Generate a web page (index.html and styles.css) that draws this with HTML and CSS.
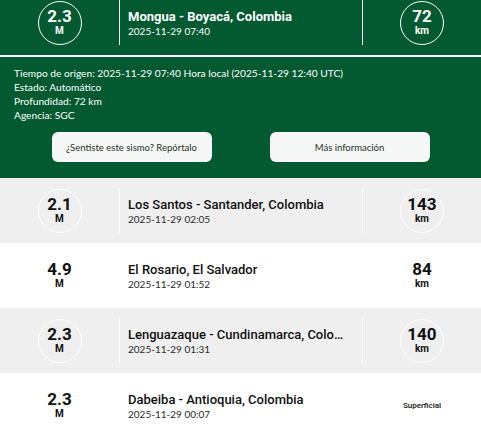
FILE: index.html
```html
<!DOCTYPE html>
<html lang="es">
<head>
  <meta charset="UTF-8" />
  <meta name="viewport" content="width=device-width, initial-scale=1" />
  <title>Sismos recientes</title>
  <link rel="stylesheet" href="styles.css">
</head>
<body>
  <div class="quake-list">

    <div class="quake open">
      <div class="quake-row">
        <div class="col-mag">
          <div class="badge"><span class="value">2.3</span><span class="unit">M</span></div>
        </div>
        <div class="col-info">
          <div class="place">Mongua - Boyacá, Colombia</div>
          <div class="time">2025-11-29 07:40</div>
        </div>
        <div class="col-depth">
          <div class="badge"><span class="value">72</span><span class="unit">km</span></div>
        </div>
      </div>
      <div class="details">
        <p>Tiempo de origen: 2025-11-29 07:40 Hora local (2025-11-29 12:40 UTC)</p>
        <p>Estado: Automático</p>
        <p>Profundidad: 72 km</p>
        <p>Agencia: SGC</p>
        <div class="actions">
          <button class="action-btn">¿Sentiste este sismo? Repórtalo</button>
          <button class="action-btn">Más información</button>
        </div>
      </div>
    </div>

    <div class="quake gray">
      <div class="quake-row">
        <div class="col-mag">
          <div class="badge"><span class="value">2.1</span><span class="unit">M</span></div>
        </div>
        <div class="col-info">
          <div class="place">Los Santos - Santander, Colombia</div>
          <div class="time">2025-11-29 02:05</div>
        </div>
        <div class="col-depth">
          <div class="badge"><span class="value">143</span><span class="unit">km</span></div>
        </div>
      </div>
    </div>

    <div class="quake">
      <div class="quake-row">
        <div class="col-mag">
          <div class="badge"><span class="value">4.9</span><span class="unit">M</span></div>
        </div>
        <div class="col-info">
          <div class="place">El Rosario, El Salvador</div>
          <div class="time">2025-11-29 01:52</div>
        </div>
        <div class="col-depth">
          <div class="badge"><span class="value">84</span><span class="unit">km</span></div>
        </div>
      </div>
    </div>

    <div class="quake gray">
      <div class="quake-row">
        <div class="col-mag">
          <div class="badge"><span class="value">2.3</span><span class="unit">M</span></div>
        </div>
        <div class="col-info">
          <div class="place">Lenguazaque - Cundinamarca, Colombia</div>
          <div class="time">2025-11-29 01:31</div>
        </div>
        <div class="col-depth">
          <div class="badge"><span class="value">140</span><span class="unit">km</span></div>
        </div>
      </div>
    </div>

    <div class="quake">
      <div class="quake-row">
        <div class="col-mag">
          <div class="badge"><span class="value">2.3</span><span class="unit">M</span></div>
        </div>
        <div class="col-info">
          <div class="place">Dabeiba - Antioquia, Colombia</div>
          <div class="time">2025-11-29 00:07</div>
        </div>
        <div class="col-depth">
          <span class="shallow">Superficial</span>
        </div>
      </div>
    </div>

  </div>
</body>
</html>
```

FILE: styles.css
```css
body {
  margin: 0;
  padding: 0;
  font-family: Roboto, "Liberation Sans", sans-serif;
  background-color: #fff;
  color: #111;
  overflow: hidden;
}

/* list is scrolled a little, first row is cut at the top */
.quake-list {
  margin-top: -10px;
}

.quake {
  background-color: #fff;
}
.quake.gray {
  background-color: #efefef;
}
.quake.open {
  background-color: #035a31;
  color: white;
}

.quake-row {
  display: grid;
  grid-template-columns: 119px 1fr 118px;
  align-items: center;
  height: 65px;
}

.col-mag, .col-depth {
  display: flex;
  justify-content: center;
  align-items: center;
}

.col-info {
  height: 45px;
  border-left: 1px solid #fff;
  border-right: 1px solid #fff;
  padding: 0 14px 0 8px;
  display: flex;
  flex-direction: column;
  justify-content: center;
  min-width: 0;
}

.place {
  font-size: 13px;
  font-weight: 500;
  line-height: 17px;
  white-space: nowrap;
  overflow: hidden;
  text-overflow: ellipsis;
}
.open .place {
  font-weight: 700;
}
.time {
  font-family: Lato, sans-serif;
  font-size: 10px;
  line-height: 13px;
  color: #2a2a2a;
}
.open .time {
  color: white;
}

.badge {
  width: 42px;
  height: 42px;
  border: 1px solid #fff;
  border-radius: 50%;
  display: flex;
  flex-direction: column;
  justify-content: center;
  align-items: center;
}
.badge .value {
  font-size: 17px;
  font-weight: 700;
  line-height: 17px;
}
.badge .unit {
  font-size: 10px;
  font-weight: 700;
  line-height: 12px;
}

.shallow {
  font-size: 8px;
  font-weight: 500;
}

.details {
  border-top: 2px solid #fff;
  padding: 9px 14px 16px;
  font-family: Lato, sans-serif;
  font-size: 10.2px;
  line-height: 14px;
}
.details p {
  margin: 0;
}

.actions {
  display: flex;
  justify-content: center;
  gap: 58px;
  margin-top: 10px;
}
.action-btn {
  width: 160px;
  height: 30px;
  background-color: #f4f7f5;
  color: #1e3326;
  border: none;
  border-radius: 6px;
  font-family: Lato, sans-serif;
  font-size: 9.5px;
  cursor: pointer;
}
```
